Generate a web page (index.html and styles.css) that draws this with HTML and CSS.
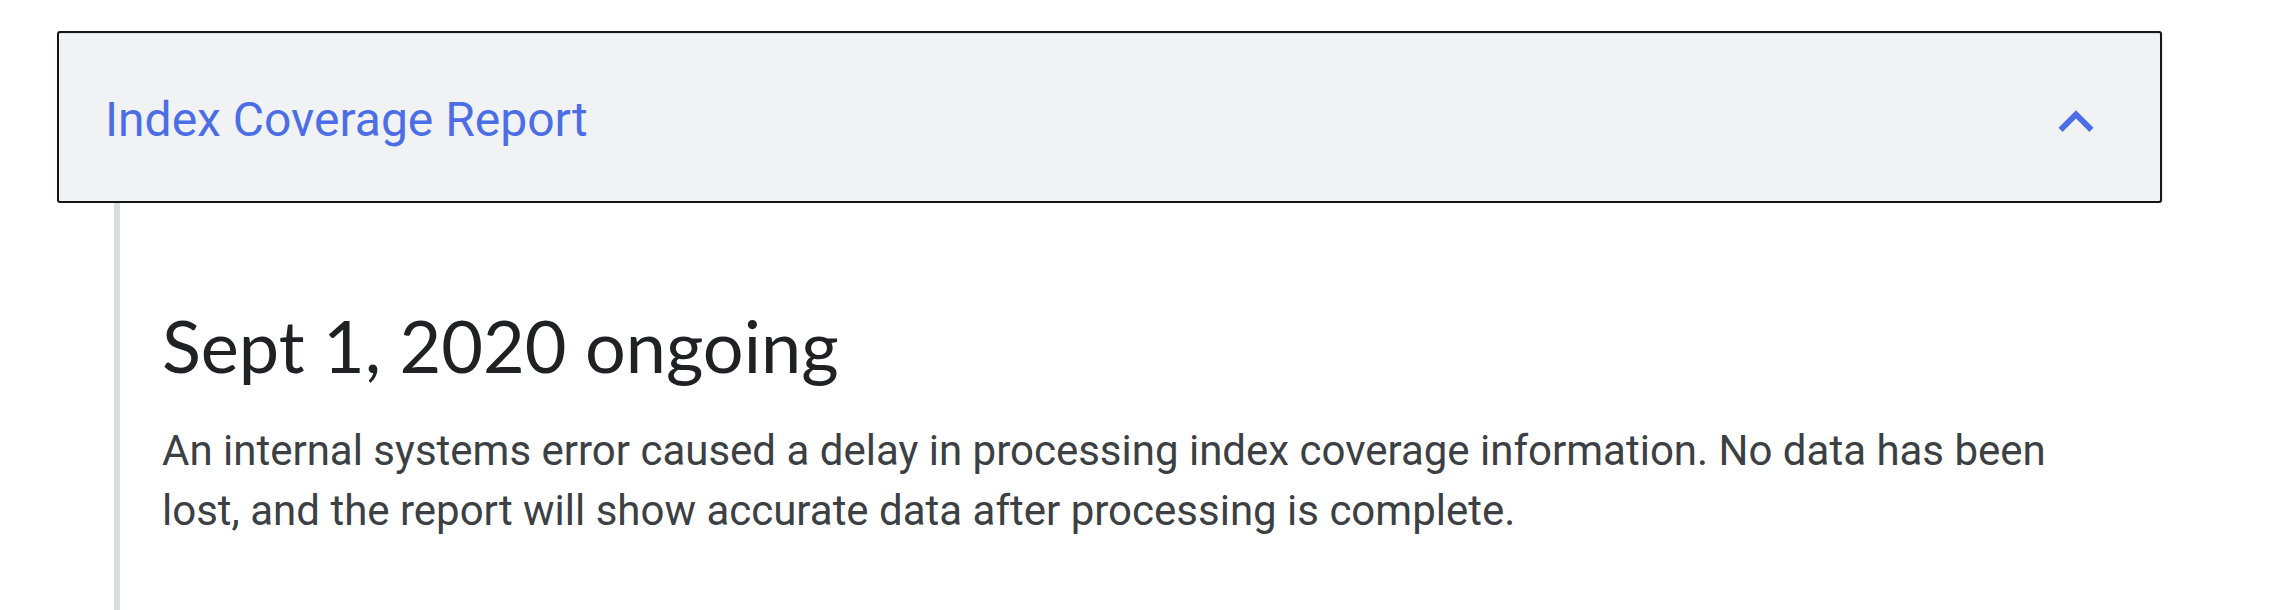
FILE: index.html
```html
<!DOCTYPE html>
<html lang="en">
<head>
<meta charset="utf-8">
<title>Index Coverage Report</title>
<link rel="stylesheet" href="styles.css">
</head>
<body>
<div class="page">
  <div class="accordion">
    <div class="accordion-header">
      <span class="accordion-title">Index Coverage Report</span>
      <svg class="chevron" viewBox="0 0 24 24" aria-hidden="true">
        <path d="M12 8l-6 6 1.41 1.41L12 10.83l4.59 4.58L18 14z"/>
      </svg>
    </div>
    <div class="accordion-body">
      <h2 class="incident-title">Sept 1, 2020 ongoing</h2>
      <p class="incident-text">An internal systems error caused a delay in processing index coverage information. No data has been lost, and the report will show accurate data after processing is complete.</p>
    </div>
  </div>
</div>
</body>
</html>
```
FILE: styles.css
```css
html, body {
  margin: 0;
  padding: 0;
  background: #ffffff;
}

body {
  overflow: hidden;
  font-family: Roboto, "Liberation Sans", sans-serif;
}

.page {
  padding: 31px 0 0 57px;
  width: 2105px;
}

.accordion-header {
  box-sizing: border-box;
  height: 172px;
  display: flex;
  align-items: center;
  justify-content: space-between;
  padding: 0 49px 0 46px;
  background: #f1f2f4;
  border: 2px solid #161616;
  border-radius: 3px;
  box-shadow: inset 0 1px 0 #dcdde3, 1px 0 0 #eeeeee;
}

.accordion-title {
  margin-top: 5px;
  font-family: Roboto, "Liberation Sans", sans-serif;
  font-size: 48px;
  line-height: 56px;
  color: #4b6ee6;
}

.chevron {
  width: 70px;
  height: 70px;
  margin-top: 10px;
  fill: #4b6ee6;
}

.accordion-body {
  margin-left: 57px;
  border-left: 6px solid #dadce0;
  padding: 99px 60px 69px 42px;
}

.incident-title {
  margin: 0;
  font-family: Lato, "Open Sans", sans-serif;
  font-weight: 400;
  font-size: 72px;
  line-height: 86px;
  color: #202124;
}

.incident-text {
  margin: 33px 0 0 0;
  font-family: Roboto, "Liberation Sans", sans-serif;
  font-size: 42px;
  line-height: 60px;
  color: #3c4043;
}
```
